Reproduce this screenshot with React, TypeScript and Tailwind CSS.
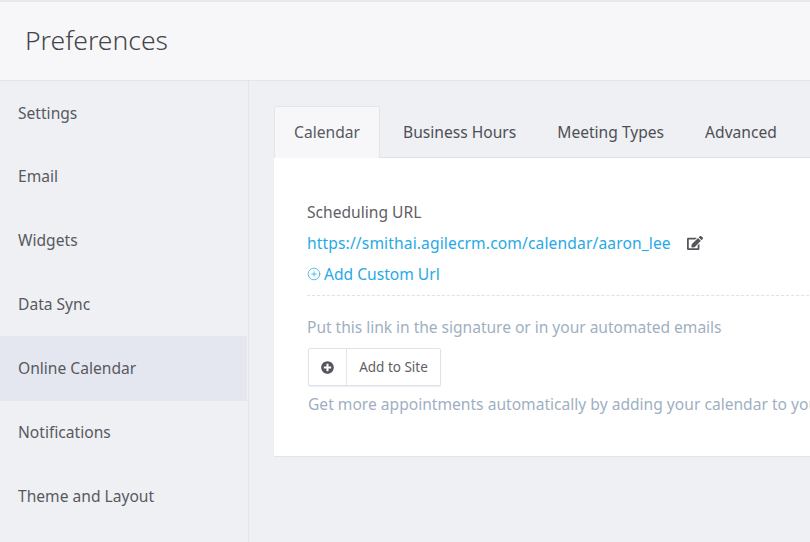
import { FaEdit, FaPlusCircle } from 'react-icons/fa';
import { CirclePlus } from 'lucide-react';

const menu = ['Settings', 'Email', 'Widgets', 'Data Sync', 'Online Calendar', 'Notifications', 'Theme and Layout'];
const tabs = ['Business Hours', 'Meeting Types', 'Advanced'];

export default function App() {
  return (
    <div className="w-[810px] h-[542px] overflow-hidden flex flex-col bg-[#eef0f4] font-['Noto_Sans',sans-serif] text-[#58595f]">
      {/* Header */}
      <div className="h-[81px] shrink-0 border-t-2 border-b border-t-[#e8e8ec] border-b-[#e3e5ea] bg-[#f7f7f9] flex items-center pl-[25px]">
        <h1 className="text-[26.5px] font-light text-[#44454a] pb-[1px]">Preferences</h1>
      </div>

      <div className="flex flex-1 min-h-0">
        {/* Sidebar */}
        <div className="w-[249px] shrink-0 border-r border-[#e3e5ea] pr-[1px]">
          {menu.map((item) => (
            <div
              key={item}
              className={`flex items-center pl-[18px] text-[15.6px] ${item === 'Online Calendar' ? 'h-[65px] pt-[1px] bg-[#e4e7f0]' : 'h-[63.7px] pt-[2px] border-b border-[#eceef2]'}`}
            >
              {item}
            </div>
          ))}
        </div>

        {/* Main */}
        <div className="flex-1 min-w-0 pl-[25px] pt-[25px]">
          <div className="flex h-[52px] w-[600px] border-b border-[#dfe1e8]">
            <div className="w-[106px] h-[52px] mr-[2.5px] flex items-center justify-center bg-[#f7f7f9] border border-b-0 border-[#e3e5ea] rounded-t-[2px] text-[15.6px]">
              Calendar
            </div>
            {tabs.map((tab) => (
              <div key={tab} className="px-[20.5px] pt-[2px] h-[51px] flex items-center text-[15.6px] whitespace-nowrap text-[#4e4f55]">
                {tab}
              </div>
            ))}
          </div>

          <div className="w-[600px] h-[299px] bg-white border-b border-[#e3e5ea] pl-[33px] pt-[44px] whitespace-nowrap text-[15.6px]">
            <div className="leading-[20px] text-[#5f6066]">Scheduling URL</div>
            <div className="flex items-center mt-[11px] leading-[20px] text-[#27a9e6] tracking-[0.13px]">
              https://smithai.agilecrm.com/calendar/aaron_lee
              <FaEdit className="ml-[16px] text-[16px] text-[#55565c]" />
            </div>
            <div className="flex items-center mt-[11px] leading-[20px] text-[#27a9e6]">
              <CirclePlus className="w-[14px] h-[14px] mr-[3px]" strokeWidth={1.25} />
              Add Custom Url
            </div>
            <div className="mt-[11px] border-t border-dashed border-[#dfe1e6]" />
            <div className="mt-[21px] leading-[20px] text-[#9fafc2] tracking-[-0.04px]">Put this link in the signature or in your automated emails</div>
            <div className="mt-[11px] ml-[1px] flex w-[133px] h-[38px] bg-white border border-[#dfe2ea] rounded-[2px] shadow-[0_1px_1px_rgba(180,185,200,0.25)]">
              <div className="w-[38px] flex items-center justify-center border-r border-[#e3e5ea]">
                <FaPlusCircle className="text-[13px] text-[#55565c]" />
              </div>
              <div className="flex-1 flex items-center justify-center text-[13.5px] text-[#5f6066]">Add to Site</div>
            </div>
            <div className="mt-[8px] ml-[1px] leading-[20px] text-[#9fafc2]">Get more appointments automatically by adding your calendar to your website</div>
          </div>
        </div>
      </div>
    </div>
  );
}
